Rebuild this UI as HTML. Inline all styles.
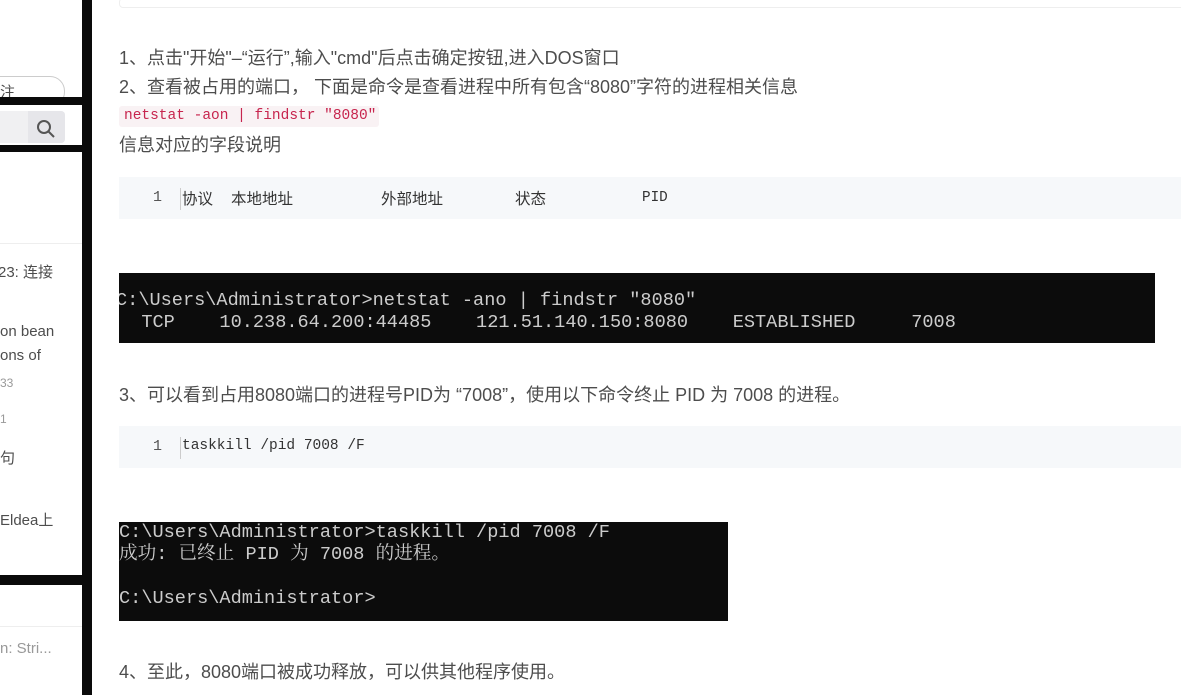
<!DOCTYPE html>
<html><head><meta charset="utf-8"><style>
body{margin:0;width:1181px;height:695px;overflow:hidden;background:#fff;position:relative;font-family:"Liberation Sans","Noto Sans CJK SC",sans-serif;color:#4d4d4d}
.a{position:absolute}
.side{left:0;top:0;width:92px;height:695px;background:#0a0a0a}
.p{position:absolute;left:0;width:82px;background:#fff;overflow:hidden}
.t{position:absolute;font-size:15px;white-space:nowrap;color:#4d4d4d}
.m{font-size:18px}
.mono{font-family:"Liberation Mono","Noto Sans CJK SC",monospace}
.cmd{background:#0c0c0c;color:#cccccc;font-family:"Liberation Mono","Noto Serif CJK SC",monospace;font-size:18.6px;white-space:pre;line-height:22px;overflow:hidden}
.code{background:#f6f8fa;left:119px;width:1062px;font-size:14.3px;color:#333}
.ln{position:absolute;left:0;width:43px;text-align:right;color:#555;font-size:15px;top:12px;height:20px}
.bar{position:absolute;left:61px;top:11px;width:1px;height:22px;background:#ccc}
.cj{position:absolute;top:10px;font-size:15.5px;font-family:"Liberation Sans","Noto Sans CJK SC",sans-serif;white-space:nowrap}
</style></head><body>
<div class="a side">
 <div class="p" style="top:0;height:97px"><div class="a" style="left:-20px;top:76px;width:85px;height:31px;border:1px solid #ccc;border-radius:15px;box-sizing:border-box"></div><div class="t" style="left:0;top:81px;font-size:15px">注</div></div>
 <div class="p" style="top:105px;height:40px"><div class="a" style="left:0;top:6px;width:65px;height:32px;background:#f0f0f2;border-radius:0 4px 4px 0"></div><div class="a" style="left:28px;top:6px;width:37px;height:32px;background:#e6e6ea;border-radius:0 4px 4px 0"></div>
 <svg class="a" style="left:36px;top:14px" width="20" height="20" viewBox="0 0 20 20"><circle cx="8" cy="8" r="6" stroke="#555" stroke-width="2" fill="none"/><path d="M12.5 12.5L18 18" stroke="#555" stroke-width="2"/></svg></div>
 <div class="p" style="top:152px;height:423px"><div class="a" style="left:0;top:91px;width:82px;height:1px;background:#eee"></div>
  <div class="t" style="left:-2px;top:109px;font-size:15px">23: 连接</div>
  <div class="t" style="left:0;top:171px;font-size:15px">on bean</div>
  <div class="t" style="left:0;top:195px;font-size:15px">ons of</div>
  <div class="t" style="left:0;top:224px;font-size:12px;color:#999">33</div>
  <div class="t" style="left:0;top:260px;font-size:12px;color:#999">1</div>
  <div class="t" style="left:0;top:295px;font-size:15px">句</div>
  <div class="t" style="left:0;top:357px;font-size:15px">Eldea上</div></div>
 <div class="p" style="top:585px;height:110px"><div class="a" style="left:0;top:41px;width:82px;height:1px;background:#eee"></div><div class="t" style="left:0;top:55px;font-size:15px;color:#999">n: Stri...</div></div>
</div>
<div class="a" style="left:119px;top:-2px;width:1070px;height:8px;border:1px solid #eee;border-radius:4px"></div>
<div class="t m" style="left:119px;top:44px">1、点击"开始"–“运行”,输入"cmd"后点击确定按钮,进入DOS窗口</div>
<div class="t m" style="left:119px;top:73px">2、查看被占用的端口， 下面是命令是查看进程中所有包含“8080”字符的进程相关信息</div>
<div class="a mono" style="left:119px;top:106px;width:260px;height:21px;background:#f9f2f4;color:#c7254e;font-size:14.5px;line-height:21px;border-radius:3px;padding-left:5px;box-sizing:border-box;white-space:nowrap;overflow:hidden">netstat -aon | findstr "8080"</div>
<div class="t m" style="left:119px;top:131px">信息对应的字段说明</div>
<div class="a code" style="top:177px;height:42px"><div class="ln mono">1</div><div class="bar"></div>
 <span class="cj" style="left:63px">协议</span><span class="cj" style="left:112px">本地地址</span><span class="cj" style="left:262px">外部地址</span><span class="cj" style="left:396px">状态</span><span class="a mono" style="left:523px;top:13px">PID</span></div>
<div class="a cmd" style="left:119px;top:273px;width:1036px;height:70px;padding-top:17px;box-sizing:border-box"><span style="margin-left:-3px">C:\Users\Administrator&gt;netstat -ano | findstr "8080"
  TCP    10.238.64.200:44485    121.51.140.150:8080    ESTABLISHED     7008</span></div>
<div class="t m" style="left:119px;top:381px">3、可以看到占用8080端口的进程号PID为 “7008”，使用以下命令终止 PID 为 7008 的进程。</div>
<div class="a code" style="top:426px;height:42px"><div class="ln mono">1</div><div class="bar"></div><div class="a mono" style="left:63px;top:12px;white-space:pre;font-size:14.5px">taskkill /pid 7008 /F</div></div>
<div class="a cmd" style="left:119px;top:522px;width:609px;height:99px;padding-top:0">C:\Users\Administrator&gt;taskkill /pid 7008 /F
成功: 已终止 PID 为 7008 的进程。

C:\Users\Administrator&gt;</div>
<div class="t m" style="left:119px;top:658px">4、至此，8080端口被成功释放，可以供其他程序使用。</div>
</body></html>
